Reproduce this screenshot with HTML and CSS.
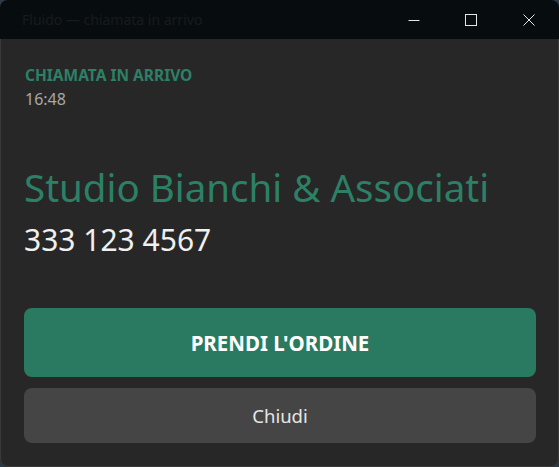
FILE: index.html
```html
<!DOCTYPE html>
<html lang="it">
  <head>
    <meta charset="UTF-8" />
    <meta name="viewport" content="width=device-width, initial-scale=1.0" />
    <title>Fluido — chiamata in arrivo</title>
    <link rel="stylesheet" href="styles.css">
  </head>
  <body>
    <div class="window">
      <div class="titlebar">
        <span class="title">Fluido — chiamata in arrivo</span>
        <div class="controls">
          <span class="ctrl">
            <svg width="12" height="12" viewBox="0 0 12 12"><path d="M0.5 6.5h11" stroke="#e6e6e6" stroke-width="1" /></svg>
          </span>
          <span class="ctrl">
            <svg width="12" height="12" viewBox="0 0 12 12"><rect x="0.5" y="0.5" width="11" height="11" fill="none" stroke="#e6e6e6" stroke-width="1" /></svg>
          </span>
          <span class="ctrl">
            <svg width="12" height="12" viewBox="0 0 12 12"><path d="M0.5 0.5l11 11M11.5 0.5L0.5 11.5" stroke="#e6e6e6" stroke-width="1" /></svg>
          </span>
        </div>
      </div>
      <div class="content">
        <div class="label">CHIAMATA IN ARRIVO</div>
        <div class="time">16:48</div>
        <h1 class="caller">Studio Bianchi &amp; Associati</h1>
        <div class="number">333 123 4567</div>
        <div class="actions">
          <button class="btn primary">PRENDI L'ORDINE</button>
          <button class="btn secondary">Chiudi</button>
        </div>
      </div>
    </div>
  </body>
</html>
```

FILE: styles.css
```css
html,
body {
  margin: 0;
  height: 100%;
  background-color: #2b3a44;
}

body {
  font-family: "Noto Sans", "Open Sans", sans-serif;
}

.window {
  height: 467px;
  background-color: #272727;
  border-radius: 8px;
  box-shadow: inset 0 0 0 1px #3a3a3a;
  overflow: hidden;
  display: flex;
  flex-direction: column;
}

.titlebar {
  height: 39px;
  background-color: #070d0f;
  display: flex;
  align-items: center;
  justify-content: space-between;
  flex-shrink: 0;
}

.title {
  padding-left: 22px;
  font-size: 14px;
  color: #171b1d;
}

.controls {
  display: flex;
  height: 100%;
}

.ctrl {
  width: 57px;
  display: flex;
  align-items: center;
  justify-content: center;
}

.ctrl:last-child {
  width: 60px;
}

.content {
  padding: 26px 23px 0 24px;
  display: flex;
  flex-direction: column;
}

.label {
  font-size: 15.5px;
  font-weight: bold;
  color: #2c8066;
  padding-left: 1px;
  line-height: 20px;
}

.time {
  font-size: 16px;
  color: #a8a8a8;
  padding-left: 1px;
  line-height: 20px;
  margin-top: 4px;
}

.caller {
  margin: 54px 0 0 0;
  font-size: 38.5px;
  font-weight: normal;
  color: #2c8066;
  line-height: 48px;
}

.number {
  margin-top: 9px;
  font-size: 30px;
  color: #f0f0f0;
  line-height: 40px;
}

.actions {
  margin-top: 48px;
  display: flex;
  flex-direction: column;
  gap: 11px;
}

.btn {
  border: none;
  border-radius: 8px;
  font-family: "Noto Sans", "Open Sans", sans-serif;
  width: 100%;
}

.primary {
  height: 69px;
  background-color: #2a7a62;
  color: #ffffff;
  font-size: 20.5px;
  font-weight: bold;
}

.secondary {
  height: 55px;
  background-color: #454545;
  color: #e6e6e6;
  font-size: 18.5px;
}
```
